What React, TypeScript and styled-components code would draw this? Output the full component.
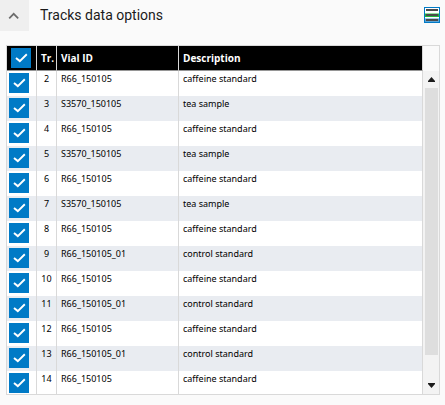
import React, { useState } from "react";
import styled, { createGlobalStyle } from "styled-components";

const GlobalStyle = createGlobalStyle`
  *, *::before, *::after { box-sizing: border-box; }
  body {
    margin: 0;
    background: #fafafa;
    color: #000;
    font-family: "Noto Sans", "Open Sans", sans-serif;
    overflow: hidden;
  }
  button { padding: 0; border: 0; background: none; font: inherit; cursor: pointer; }
  svg { display: block; }
`;

const Header = styled.header`
  display: flex;
  align-items: flex-start;
  height: 31px;
  padding-right: 5px;
`;

const CollapseButton = styled.button`
  display: grid;
  place-items: center;
  width: 29px;
  height: 31px;
  && { background: #efefef; }
`;

const Title = styled.h1`
  flex: 1;
  margin: 0 0 0 11px;
  font: 400 14px/31px Roboto, sans-serif;
  color: #1a1a1a;
`;

const LayoutButton = styled.button`
  width: 16px;
  height: 16px;
  margin-top: 7px;
`;

const Frame = styled.section`
  display: flex;
  margin: 14px 5px 0 6px;
  border: 1px solid #d9d9d9;
`;

const Viewport = styled.div`
  flex: 1;
  min-width: 0;
  max-height: 348px;
  overflow: hidden;
`;

const Table = styled.table`
  width: 100%;
  table-layout: fixed;
  border-collapse: separate;
  border-spacing: 0;
  font-size: 9px;
  line-height: 14px;
`;

const Col = styled.col<{ $width?: number }>`
  width: ${(p) => (p.$width ? `${p.$width}px` : "auto")};
`;

const HeadCell = styled.th<{ $pick?: boolean }>`
  height: 25px;
  padding: ${(p) => (p.$pick ? "0 0 0 4px" : "0 4px")};
  border-right: 1px solid #d9d9d9;
  border-bottom: 1px solid #969696;
  background: #000;
  color: #fff;
  font-family: "Open Sans", "Noto Sans", sans-serif;
  font-size: 10px;
  font-weight: 700;
  text-align: left;
  vertical-align: middle;
`;

const Row = styled.tr`
  background: #fff;
  &:nth-child(even) { background: #e9ecf1; }
`;

const Cell = styled.td<{ $pick?: boolean; $center?: boolean }>`
  height: 25px;
  padding: ${(p) => (p.$pick ? "2px 0 0 2px" : p.$center ? "1px 0 0" : "1px 4px 0")};
  border-right: 1px solid #d9d9d9;
  text-align: ${(p) => (p.$center ? "center" : "left")};
  vertical-align: top;
`;

const TickBox = styled.label`
  display: grid;
  width: 20px;
  height: 20px;
  cursor: pointer;
  > * { grid-area: 1 / 1; }
`;

const TickInput = styled.input`
  appearance: none;
  width: 20px;
  height: 20px;
  margin: 0;
  border: 1px solid #007ac6;
  background: #fff;
  &:checked { background: #007ac6; }
`;

const TickMark = styled.svg`
  z-index: 1;
  pointer-events: none;
`;

const ScrollSide = styled.div`
  display: flex;
  flex-direction: column;
  width: 16px;
  padding-top: 25px;
`;

const ScrollTrack = styled.div`
  flex: 1;
  display: flex;
  flex-direction: column;
  align-items: center;
  background: #f3f3f3;
`;

const ScrollButton = styled.button`
  display: grid;
  place-items: center;
  width: 15px;
  height: 17px;
`;

const Thumb = styled.div`
  width: 13px;
  height: 267px;
  margin-bottom: auto;
  background: #dedede;
`;

interface Track {
  no: number;
  vial: string;
  description: string;
}

const tracks: Track[] = [
  { no: 2, vial: "R66_150105", description: "caffeine standard" },
  { no: 3, vial: "S3570_150105", description: "tea sample" },
  { no: 4, vial: "R66_150105", description: "caffeine standard" },
  { no: 5, vial: "S3570_150105", description: "tea sample" },
  { no: 6, vial: "R66_150105", description: "caffeine standard" },
  { no: 7, vial: "S3570_150105", description: "tea sample" },
  { no: 8, vial: "R66_150105", description: "caffeine standard" },
  { no: 9, vial: "R66_150105_01", description: "control standard" },
  { no: 10, vial: "R66_150105", description: "caffeine standard" },
  { no: 11, vial: "R66_150105_01", description: "control standard" },
  { no: 12, vial: "R66_150105", description: "caffeine standard" },
  { no: 13, vial: "R66_150105_01", description: "control standard" },
  { no: 14, vial: "R66_150105", description: "caffeine standard" },
];

interface TickProps {
  label: string;
  checked: boolean;
  onChange: (checked: boolean) => void;
}

function Tick({ label, checked, onChange }: TickProps) {
  return (
    <TickBox>
      <TickInput
        type="checkbox"
        aria-label={label}
        checked={checked}
        onChange={(e) => onChange(e.target.checked)}
      />
      {checked && (
        <TickMark width="20" height="20" viewBox="0 0 20 20" aria-hidden="true">
          <path d="M5 9.9 8.8 13.1 15.8 6.3" fill="none" stroke="#fff" strokeWidth="1.9" />
        </TickMark>
      )}
    </TickBox>
  );
}

export default function App() {
  const [picked, setPicked] = useState<number[]>(tracks.map((t) => t.no));

  const toggle = (no: number, on: boolean) =>
    setPicked((list) => (on ? [...list, no] : list.filter((n) => n !== no)));

  return (
    <main>
      <GlobalStyle />
      <Header>
        <CollapseButton type="button" aria-label="Collapse section">
          <svg width="14" height="8" viewBox="0 0 14 8" aria-hidden="true">
            <path d="M1.2 6.4 5.7 1.8 10.2 6.4" fill="none" stroke="#6c6c6c" strokeWidth="1.7" />
          </svg>
        </CollapseButton>
        <Title>Tracks data options</Title>
        <LayoutButton type="button" aria-label="Row layout">
          <svg width="16" height="16" viewBox="0 0 16 16" aria-hidden="true">
            <path fill="#007ac6" d="M0 0h16v16H0z" />
            <path fill="#fff" d="M1 1h14v14H1z" />
            <path fill="#8fe09c" d="M1 6h14v1H1z" />
            <path fill="#20b83c" d="M1 7h14v3H1z" />
            <path fill="#a5cde9" d="M1 11h14v1H1z" />
            <path fill="#5ba5d8" d="M1 12h14v3H1z" />
            <path fill="#4b4b4b" d="M2 2h12v2H2zM2 7h12v2H2zM2 12h12v2H2z" />
          </svg>
        </LayoutButton>
      </Header>
      <Frame>
        <Viewport>
          <Table>
            <colgroup>
              <Col $width={30} />
              <Col $width={20} />
              <Col $width={122} />
              <Col />
            </colgroup>
            <thead>
              <tr>
                <HeadCell $pick>
                  <Tick
                    label="Select all tracks"
                    checked={picked.length === tracks.length}
                    onChange={(on) => setPicked(on ? tracks.map((t) => t.no) : [])}
                  />
                </HeadCell>
                <HeadCell>Tr.</HeadCell>
                <HeadCell>Vial ID</HeadCell>
                <HeadCell>Description</HeadCell>
              </tr>
            </thead>
            <tbody>
              {tracks.map((t) => (
                <Row key={t.no}>
                  <Cell $pick>
                    <Tick
                      label={`Select track ${t.no}`}
                      checked={picked.includes(t.no)}
                      onChange={(on) => toggle(t.no, on)}
                    />
                  </Cell>
                  <Cell $center>{t.no}</Cell>
                  <Cell>{t.vial}</Cell>
                  <Cell>{t.description}</Cell>
                </Row>
              ))}
            </tbody>
          </Table>
        </Viewport>
        <ScrollSide>
          <ScrollTrack>
            <ScrollButton type="button" aria-label="Scroll up">
              <svg width="7" height="5" viewBox="0 0 7 5" aria-hidden="true">
                <path fill="#1c1c1c" d="M3.5 0 7 4v1H0V4z" />
              </svg>
            </ScrollButton>
            <Thumb />
            <ScrollButton type="button" aria-label="Scroll down">
              <svg width="7" height="5" viewBox="0 0 7 5" aria-hidden="true">
                <path fill="#1c1c1c" d="M0 0h7v1L3.5 5 0 1z" />
              </svg>
            </ScrollButton>
          </ScrollTrack>
        </ScrollSide>
      </Frame>
    </main>
  );
}
